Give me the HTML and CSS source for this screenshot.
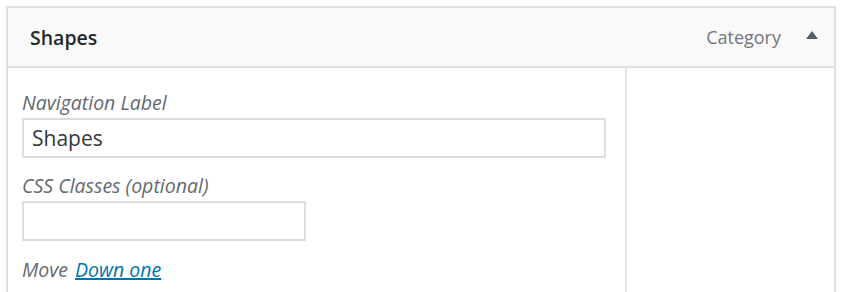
FILE: index.html
```html
<!DOCTYPE html>
<html lang="en">
<head>
<meta charset="utf-8">
<title>Menu item</title>
<link rel="stylesheet" href="styles.css">
</head>
<body>
<div class="menu-item">
  <div class="item-bar">
    <span class="item-title">Shapes</span>
    <span class="item-type">Category</span>
    <span class="item-toggle" aria-label="Collapse">
      <svg width="12" height="8" viewBox="0 0 12 8"><polygon points="6,0 12,8 0,8" fill="#555d66"/></svg>
    </span>
  </div>
  <div class="item-settings">
    <div class="settings-main">
      <label class="field-label" for="nav-label">Navigation Label</label>
      <input class="text-input wide" id="nav-label" type="text" value="Shapes">
      <label class="field-label second" for="css-classes">CSS Classes (optional)</label>
      <input class="text-input narrow" id="css-classes" type="text" value="">
      <p class="move-row"><span class="move-label">Move</span><a class="move-link" href="#">Down one</a></p>
    </div>
    <div class="settings-side"></div>
  </div>
</div>
</body>
</html>
```

FILE: styles.css
```css
html, body {
  margin: 0;
  padding: 0;
  background: #fff;
}

body {
  font-family: "Open Sans", "Liberation Sans", sans-serif;
  padding: 6px 9px 0 6px;
}

.menu-item {
  border: 2px solid #e0e0e0;
  background: #fff;
}

.item-bar {
  display: flex;
  align-items: center;
  height: 58px;
  padding: 0 16px 0 22px;
  background: #f9f9f9;
  border-bottom: 2px solid #e0e0e0;
}

.item-title {
  flex: 1;
  font-size: 19.5px;
  font-weight: 600;
  color: #23282d;
}

.item-type {
  font-size: 18px;
  color: #72777c;
  margin-right: 25px;
}

.item-toggle {
  display: flex;
  width: 12px;
  height: 8px;
  margin-top: -4px;
}

.item-settings {
  display: flex;
  min-height: 300px;
}

.settings-main {
  width: 603px;
  padding: 20px 0 40px 14px;
  border-right: 2px solid #e5e5e5;
  display: flex;
  flex-direction: column;
  align-items: flex-start;
}

.settings-side {
  flex: 1;
}

.field-label {
  display: block;
  font-size: 19.5px;
  line-height: 29px;
  font-style: italic;
  color: #646970;
  margin-bottom: 1px;
}

.field-label.second {
  margin-top: 13px;
}

.text-input {
  box-sizing: border-box;
  height: 40px;
  margin: 0;
  border: 2px solid #dddddd;
  background: #fff;
  padding: 0 8px;
  font-family: "Open Sans", "Liberation Sans", sans-serif;
  font-size: 21px;
  color: #32373c;
  outline: none;
}

.text-input.wide {
  width: 584px;
}

.text-input.narrow {
  width: 284px;
}

.move-row {
  display: flex;
  gap: 7px;
  margin: 14px 0 0;
  font-size: 19.5px;
  line-height: 29px;
  font-style: italic;
}

.move-label {
  color: #646970;
}

.move-link {
  color: #0073aa;
  text-decoration: underline;
  text-decoration-thickness: 2px;
}
```
